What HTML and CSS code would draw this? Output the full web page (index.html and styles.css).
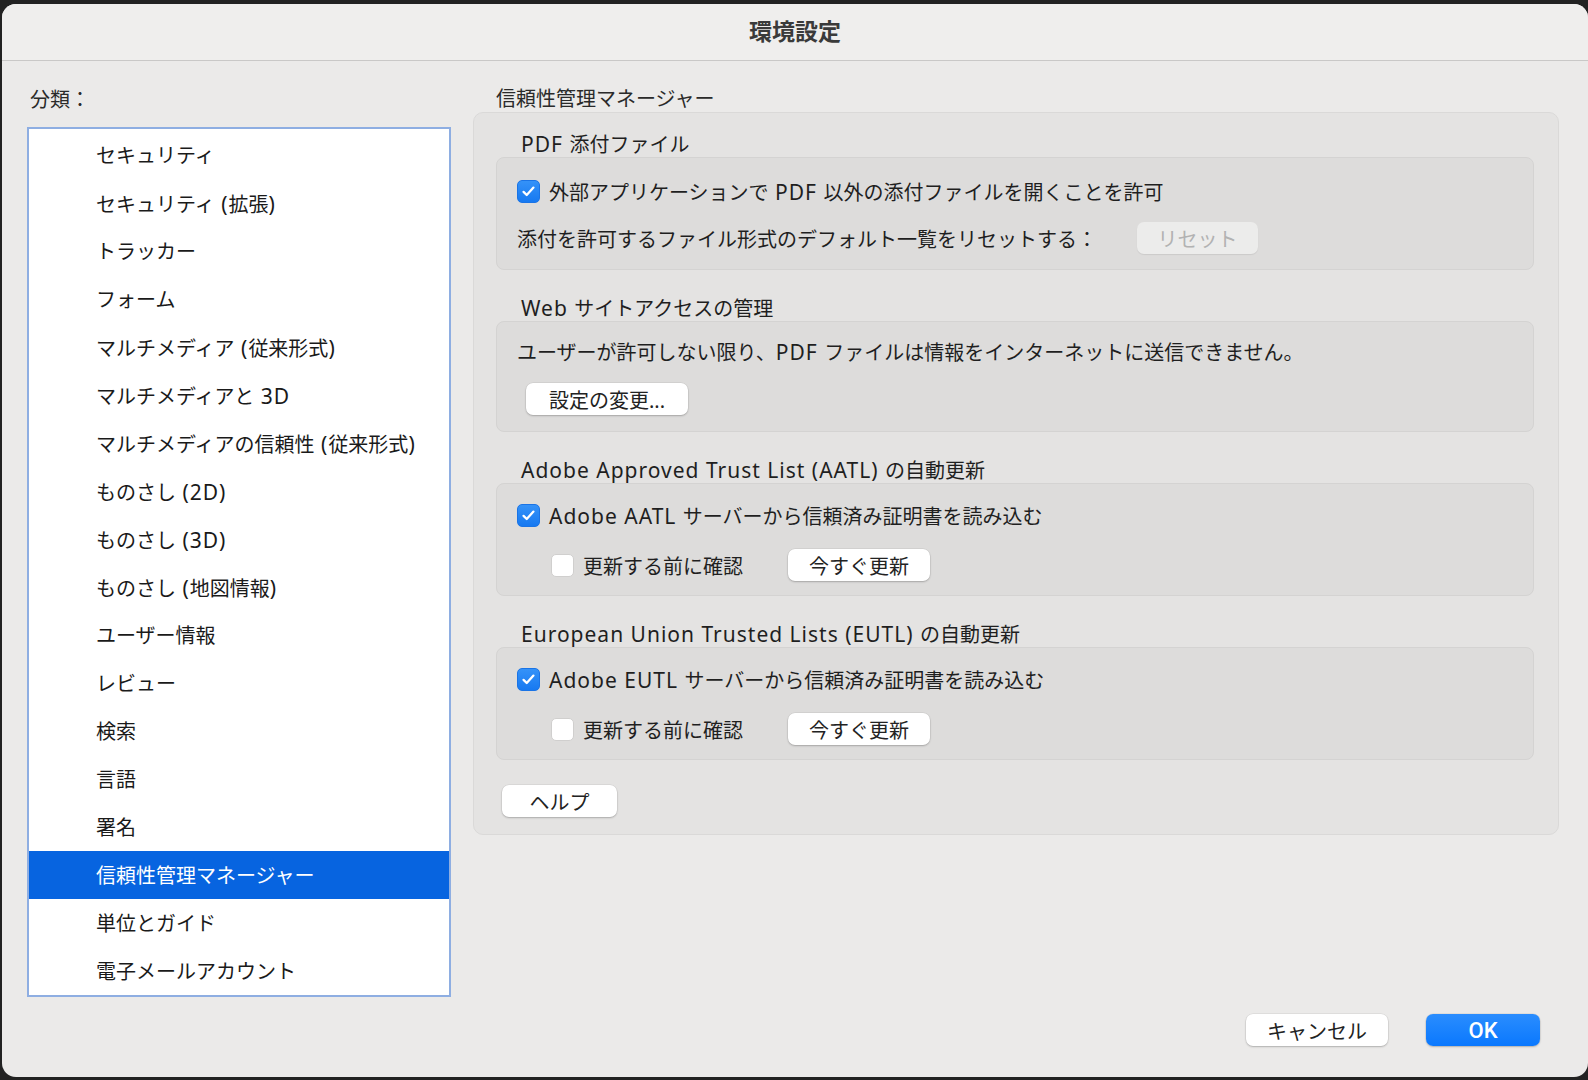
FILE: index.html
```html
<!DOCTYPE html>
<html lang="ja">
<head>
<meta charset="UTF-8">
<title>環境設定</title>
<link rel="stylesheet" href="styles.css">
</head>
<body>
<div class="window">
    <div class="titlebar">環境設定</div>
    <div class="content">
        <div class="sidebar">
            <div class="caption">分類：</div>
            <ul class="category-list">
                <li>セキュリティ</li>
                <li>セキュリティ<span class="en"> (</span>拡張<span class="en">)</span></li>
                <li>トラッカー</li>
                <li>フォーム</li>
                <li>マルチメディア<span class="en"> (</span>従来形式<span class="en">)</span></li>
                <li>マルチメディアと<span class="en"> 3D</span></li>
                <li>マルチメディアの信頼性<span class="en"> (</span>従来形式<span class="en">)</span></li>
                <li>ものさし<span class="en"> (2D)</span></li>
                <li>ものさし<span class="en"> (3D)</span></li>
                <li>ものさし<span class="en"> (</span>地図情報<span class="en">)</span></li>
                <li>ユーザー情報</li>
                <li>レビュー</li>
                <li>検索</li>
                <li>言語</li>
                <li>署名</li>
                <li class="selected">信頼性管理マネージャー</li>
                <li>単位とガイド</li>
                <li>電子メールアカウント</li>
            </ul>
        </div>
        <div class="main">
            <div class="caption main-caption">信頼性管理マネージャー</div>
            <div class="panel">
                <div class="group">
                    <div class="group-title"><span class="en">PDF </span>添付ファイル</div>
                    <div class="group-box">
                        <div class="row">
                            <span class="checkbox checked"><svg viewBox="0 0 24 24" width="17" height="17"><path d="M5 12.5l4.5 4.5L19 6.5" fill="none" stroke="#fff" stroke-width="3.2" stroke-linecap="round" stroke-linejoin="round"/></svg></span>
                            <span class="label">外部アプリケーションで<span class="en"> PDF </span>以外の添付ファイルを開くことを許可</span>
                        </div>
                        <div class="row">
                            <span>添付を許可するファイル形式のデフォルト一覧をリセットする：</span>
                            <button class="btn btn-reset" disabled>リセット</button>
                        </div>
                    </div>
                </div>
                <div class="group">
                    <div class="group-title"><span class="en">Web </span>サイトアクセスの管理</div>
                    <div class="group-box box-web">
                        <div class="row">
                            <span>ユーザーが許可しない限り、<span class="en">PDF </span>ファイルは情報をインターネットに送信できません。</span>
                        </div>
                        <div class="row">
                            <button class="btn btn-settings">設定の変更...</button>
                        </div>
                    </div>
                </div>
                <div class="group">
                    <div class="group-title"><span class="en">Adobe Approved Trust List (AATL) </span>の自動更新</div>
                    <div class="group-box box-update">
                        <div class="row">
                            <span class="checkbox checked"><svg viewBox="0 0 24 24" width="17" height="17"><path d="M5 12.5l4.5 4.5L19 6.5" fill="none" stroke="#fff" stroke-width="3.2" stroke-linecap="round" stroke-linejoin="round"/></svg></span>
                            <span class="label"><span class="en">Adobe AATL </span>サーバーから信頼済み証明書を読み込む</span>
                        </div>
                        <div class="row indent">
                            <span class="checkbox"></span>
                            <span class="label confirm">更新する前に確認</span>
                            <button class="btn btn-update">今すぐ更新</button>
                        </div>
                    </div>
                </div>
                <div class="group">
                    <div class="group-title"><span class="en">European Union Trusted Lists (EUTL) </span>の自動更新</div>
                    <div class="group-box box-update">
                        <div class="row">
                            <span class="checkbox checked"><svg viewBox="0 0 24 24" width="17" height="17"><path d="M5 12.5l4.5 4.5L19 6.5" fill="none" stroke="#fff" stroke-width="3.2" stroke-linecap="round" stroke-linejoin="round"/></svg></span>
                            <span class="label"><span class="en">Adobe EUTL </span>サーバーから信頼済み証明書を読み込む</span>
                        </div>
                        <div class="row indent">
                            <span class="checkbox"></span>
                            <span class="label confirm">更新する前に確認</span>
                            <button class="btn btn-update">今すぐ更新</button>
                        </div>
                    </div>
                </div>
                <button class="btn btn-help">ヘルプ</button>
            </div>
        </div>
    </div>
    <div class="footer">
        <button class="btn btn-cancel">キャンセル</button>
        <button class="btn btn-ok">OK</button>
    </div>
</div>
</body>
</html>
```

FILE: styles.css
```css
html, body {
    margin: 0;
    padding: 0;
}
body {
    background-color: #222222;
    font-family: "Noto Sans", "Noto Sans CJK JP", sans-serif;
    font-size: 20px;
    color: #1f1f1f;
    padding: 4px 0 0 2px;
    height: 1080px;
    box-sizing: border-box;
}
/* latin runs are set a bit wider, like the system font */
.en {
    font-size: 21px;
    letter-spacing: 1px;
}
.window {
    width: 1586px;
    height: 1073px;
    background-color: #ebeae9;
    border-radius: 14px;
    overflow: hidden;
    display: flex;
    flex-direction: column;
}
.titlebar {
    height: 56px;
    line-height: 54px;
    flex-shrink: 0;
    background-color: #efeeed;
    border-bottom: 1px solid #c9c8c7;
    text-align: center;
    font-weight: bold;
    font-size: 23px;
    color: #3a3a3a;
}
.content {
    display: flex;
    height: 936px;
    padding-left: 25px;
}
.caption {
    font-size: 20px;
    line-height: 24px;
    height: 24px;
    color: #2a2a2a;
}
.sidebar {
    width: 424px;
    padding-top: 27px;
}
.sidebar .caption {
    padding-left: 3px;
    margin-bottom: 15px;
}
.category-list {
    list-style: none;
    margin: 0;
    padding: 2px 0 0 0;
    background-color: #ffffff;
    border: 2px solid #8eaee2;
}
.category-list li {
    height: 46px;
    line-height: 46px;
    padding-top: 2px;
    padding-left: 67px;
    color: #1a1a1a;
}
.category-list li.selected {
    background-color: #0764e0;
    color: #ffffff;
}
.main {
    margin-left: 22px;
    width: 1086px;
    padding-top: 26px;
}
.main-caption {
    padding-left: 23px;
    margin-bottom: 1px;
}
.panel {
    background-color: #e4e3e2;
    border: 1px solid #dad9d8;
    border-radius: 10px;
    padding: 18px 24px 17px 22px;
}
.group + .group {
    margin-top: 25px;
}
.group-title {
    height: 26px;
    line-height: 26px;
    padding-left: 25px;
}
.group-box {
    background-color: #dddcdb;
    border: 1px solid #d4d3d2;
    border-radius: 8px;
    padding: 17px 20px 15px 20px;
    display: flex;
    flex-direction: column;
    gap: 15px;
}
.box-web {
    padding-top: 13px;
    padding-bottom: 16px;
    gap: 16px;
}
.box-update {
    padding-top: 15px;
    padding-bottom: 14px;
    gap: 18px;
}
.row {
    display: flex;
    align-items: center;
    height: 32px;
}
.row.indent {
    padding-left: 34px;
}
.checkbox {
    width: 23px;
    height: 23px;
    box-sizing: border-box;
    border-radius: 5px;
    background-color: #ffffff;
    border: 1px solid #d0cfce;
    display: flex;
    align-items: center;
    justify-content: center;
    flex-shrink: 0;
}
.checkbox.checked {
    background: linear-gradient(#3592f8, #1679f1);
    border-color: #1a74e6;
}
.label {
    margin-left: 9px;
}
.btn {
    font-family: inherit;
    font-size: 20px;
    height: 32px;
    padding: 0;
    border: none;
    border-radius: 7px;
    background-color: #ffffff;
    color: #222222;
    box-shadow: 0 1px 2px rgba(0, 0, 0, 0.22), 0 0 0 0.5px rgba(0, 0, 0, 0.08);
    cursor: pointer;
}
.btn-reset {
    width: 121px;
    margin-left: 40px;
    background-color: #ececeb;
    color: #b2b2b2;
    box-shadow: 0 1px 1px rgba(0, 0, 0, 0.08);
}
.btn-settings {
    width: 162px;
    margin-left: 9px;
}
.btn-update {
    width: 142px;
    margin-left: 45px;
}
.btn-help {
    width: 115px;
    margin-top: 25px;
    margin-left: 6px;
    display: block;
}
.footer {
    flex: 1;
    display: flex;
    justify-content: flex-end;
    align-items: flex-start;
    padding: 17px 48px 0 0;
    gap: 38px;
}
.btn-cancel {
    width: 142px;
}
.btn-ok {
    width: 114px;
    background: linear-gradient(#2a8dfe, #0a78fe);
    color: #ffffff;
    font-family: Roboto, "Liberation Sans", sans-serif;
    font-weight: 500;
    font-size: 22px;
}
```
